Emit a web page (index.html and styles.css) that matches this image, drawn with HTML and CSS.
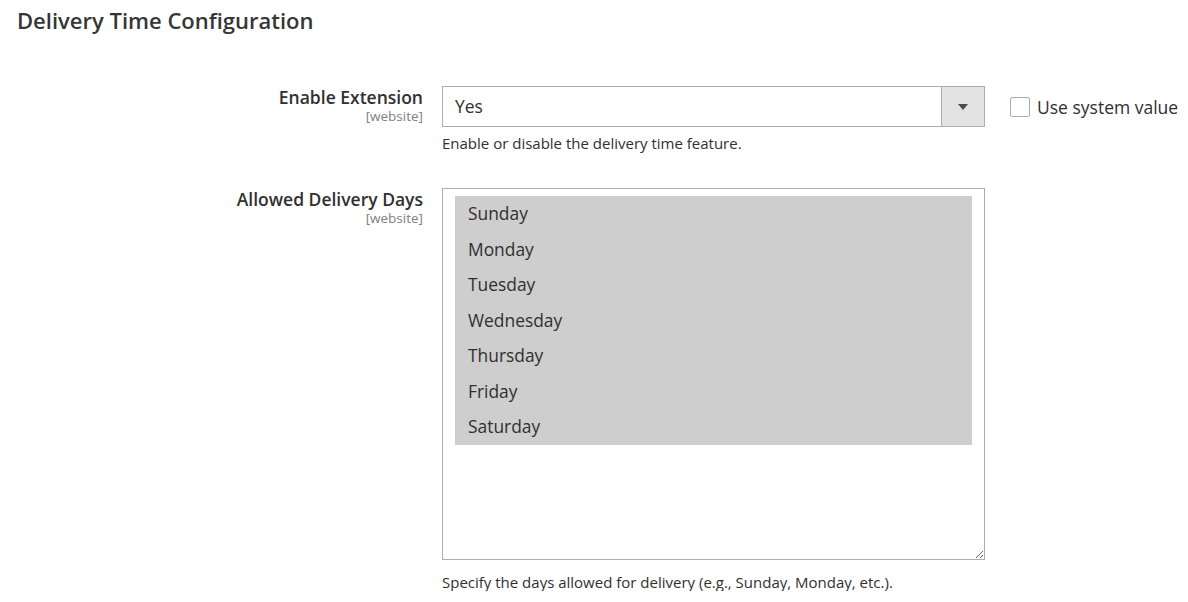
FILE: index.html
```html
<!DOCTYPE html>
<html>
<head>
<meta charset="utf-8">
<link rel="stylesheet" href="styles.css">
</head>
<body>
<div class="page">
  <h1 class="title">Delivery Time Configuration</h1>
  <div class="form">
    <div class="row row-first">
      <div class="label">
        <span class="label-text">Enable Extension</span>
        <span class="scope">[website]</span>
      </div>
      <div class="control">
        <div class="select">
          <span class="select-value">Yes</span>
          <span class="select-btn"><span class="arrow"></span></span>
        </div>
        <div class="note">Enable or disable the delivery time feature.</div>
      </div>
      <div class="system">
        <span class="checkbox"></span>
        <span class="system-text">Use system value</span>
      </div>
    </div>
    <div class="row row-second">
      <div class="label">
        <span class="label-text">Allowed Delivery Days</span>
        <span class="scope">[website]</span>
      </div>
      <div class="control">
        <div class="multiselect">
          <div class="options">
            <div class="option">Sunday</div>
            <div class="option">Monday</div>
            <div class="option">Tuesday</div>
            <div class="option">Wednesday</div>
            <div class="option">Thursday</div>
            <div class="option">Friday</div>
            <div class="option">Saturday</div>
          </div>
        </div>
        <div class="note note-2">Specify the days allowed for delivery (e.g., Sunday, Monday, etc.).</div>
      </div>
      <div class="system"></div>
    </div>
  </div>
</div>
</body>
</html>
```

FILE: styles.css
```css
html, body {
  margin: 0;
  padding: 0;
  background: #ffffff;
}
body {
  font-family: "Open Sans", "Noto Sans", sans-serif;
  color: #303030;
}
.page {
  padding: 5px 0 0 17px;
}
.title {
  margin: 0;
  font-size: 22px;
  font-weight: 600;
  line-height: 30px;
  color: #363636;
}
.form {
  margin-top: 51px;
}
.row {
  display: grid;
  grid-template-columns: 425px 543px auto;
}
.row-second {
  margin-top: 36px;
}
.label {
  display: flex;
  flex-direction: column;
  align-items: flex-end;
  padding-right: 19px;
  padding-top: 1px;
}
.label-text {
  font-size: 17.5px;
  font-weight: 600;
  line-height: 20px;
  color: #303030;
}
.scope {
  font-size: 13.5px;
  line-height: 16px;
  color: #808080;
  margin-top: 1px;
}
.control {
  display: flex;
  flex-direction: column;
}
.select {
  height: 41px;
  box-sizing: border-box;
  border: 1px solid #adadad;
  display: flex;
  align-items: stretch;
}
.select-value {
  flex: 1;
  font-size: 17.5px;
  line-height: 39px;
  padding-left: 12px;
  color: #303030;
}
.select-btn {
  width: 42px;
  background: #e3e3e3;
  border-left: 1px solid #adadad;
  display: flex;
  align-items: center;
  justify-content: center;
}
.arrow {
  width: 0;
  height: 0;
  border-left: 5px solid transparent;
  border-right: 5px solid transparent;
  border-top: 6px solid #514943;
  margin-top: 1px;
}
.note {
  font-size: 15px;
  line-height: 18px;
  margin-top: 7px;
  color: #303030;
}
.note-2 {
  margin-top: 13px;
}
.system {
  display: flex;
  align-items: center;
  height: 41px;
  padding-left: 25px;
}
.checkbox {
  width: 18px;
  height: 18px;
  border: 1px solid #adadad;
  border-radius: 2px;
  background: #fff;
  margin-top: 1px;
  flex-shrink: 0;
}
.system-text {
  font-size: 17.5px;
  margin-left: 7px;
  color: #303030;
  white-space: nowrap;
}
.multiselect {
  height: 372px;
  box-sizing: border-box;
  border: 1px solid #adadad;
  padding: 7px 12px;
  overflow: auto;
  resize: vertical;
}
.options {
  background: #cecece;
}
.option {
  font-size: 17.4px;
  height: 35.55px;
  line-height: 35.55px;
  padding-left: 13px;
  color: #303030;
}
```
